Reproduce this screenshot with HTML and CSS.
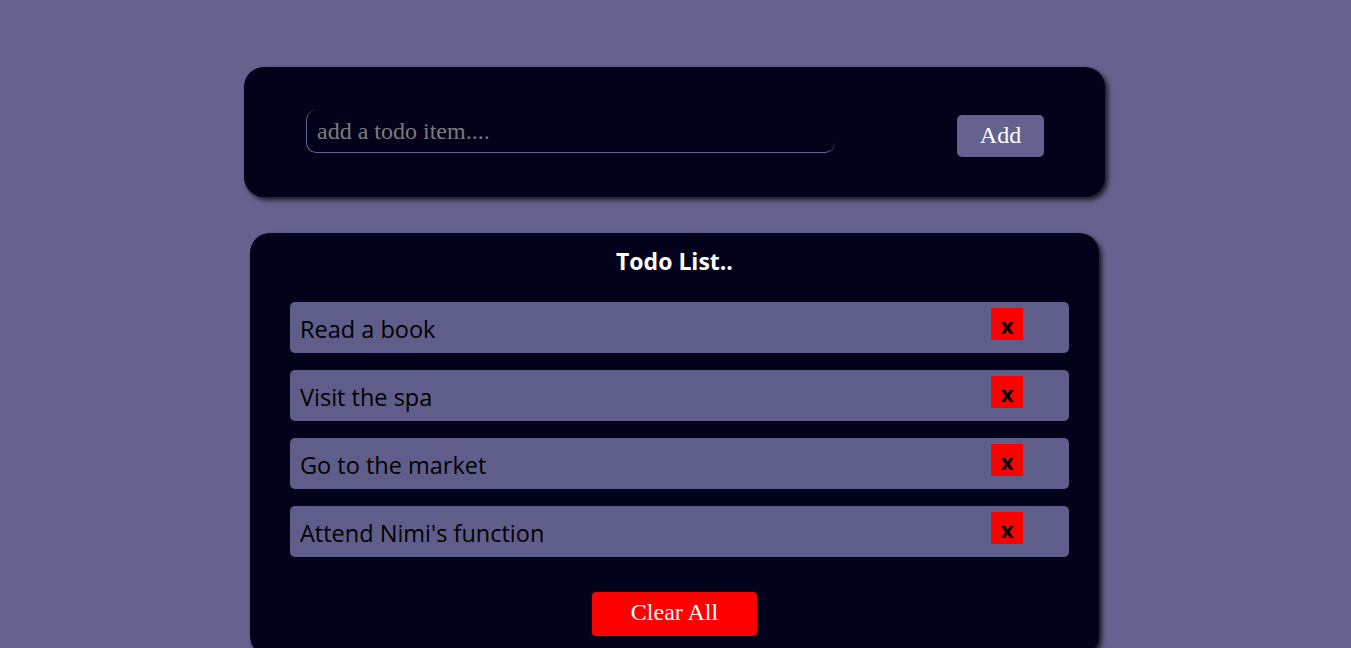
FILE: index.html
```html
<!DOCTYPE html>
<html>
<head>
<meta charset="utf-8">
<link rel="stylesheet" href="styles.css">
</head>
<body>
<div class="input-card">
  <input class="todo-input" type="text" placeholder="add a todo item....">
  <button class="add-btn">Add</button>
</div>
<div class="list-card">
  <h2 class="title">Todo List..</h2>
  <ul class="list">
    <li class="item"><span class="item-text">Read a book</span><button class="del">x</button></li>
    <li class="item"><span class="item-text">Visit the spa</span><button class="del">x</button></li>
    <li class="item"><span class="item-text">Go to the market</span><button class="del">x</button></li>
    <li class="item"><span class="item-text">Attend Nimi's function</span><button class="del">x</button></li>
  </ul>
  <div class="clear-row"><button class="clear-btn">Clear All</button></div>
</div>
</body>
</html>
```
FILE: styles.css
```css
html, body {
  margin: 0;
  padding: 0;
  background: #65628f;
  height: 100%;
  overflow: hidden;
}
body {
  padding-top: 67px;
  box-sizing: border-box;
}
.input-card {
  width: 861px;
  height: 130px;
  margin: 0 auto;
  box-sizing: border-box;
  background: #03021b;
  border-radius: 20px;
  box-shadow: 3px 3px 5px rgba(0, 0, 0, 0.75);
  display: flex;
  align-items: flex-start;
  justify-content: space-between;
  padding: 43px 61px 0 62px;
  position: relative;
  left: -1px;
}
.todo-input {
  width: 529px;
  height: 43px;
  box-sizing: border-box;
  background: transparent;
  border: none;
  border-left: 1px solid #65628f;
  border-bottom: 1px solid #65628f;
  border-radius: 10px;
  padding: 0 10px;
  font-family: "Liberation Serif", serif;
  font-size: 24px;
  color: #ccc;
  outline: none;
}
.todo-input::placeholder {
  color: #7c7b80;
}
.add-btn {
  margin-top: 5px;
  width: 87px;
  height: 42px;
  background: #65628f;
  border: none;
  border-radius: 5px;
  color: #fff;
  font-family: "Liberation Serif", serif;
  font-size: 24px;
  padding: 0 0 2px;
}
.list-card {
  width: 849px;
  margin: 36px auto 0;
  background: #03021b;
  border-radius: 20px;
  box-shadow: 3px 3px 5px rgba(0, 0, 0, 0.75);
  padding: 14px 30px 20px 40px;
  box-sizing: border-box;
  position: relative;
  left: -1px;
}
.title {
  margin: 0 10px 0 0;
  text-align: center;
  color: #fff;
  font-family: "Open Sans", sans-serif;
  font-weight: 700;
  font-size: 23px;
  line-height: 28px;
}
.list {
  list-style: none;
  margin: 27px 0 0;
  padding: 0;
  display: flex;
  flex-direction: column;
  gap: 17px;
}
.item {
  height: 51px;
  background: #5f5e8a;
  border-radius: 5px;
  display: flex;
  align-items: flex-start;
  box-sizing: border-box;
}
.item-text {
  padding: 12px 0 0 10px;
  font-family: "Open Sans", sans-serif;
  font-weight: 500;
  font-size: 23.5px;
  line-height: 30px;
  color: #000;
}
.del {
  margin: 6px 46px 0 auto;
  width: 32px;
  height: 32px;
  background: #ff0000;
  border: none;
  padding: 2px 0 0;
  font-family: "Open Sans", sans-serif;
  font-weight: 700;
  font-size: 22px;
  line-height: 24px;
  color: #000;
}
.clear-row {
  display: flex;
  justify-content: center;
  margin: 35px 10px 0 0;
}
.clear-btn {
  width: 165px;
  height: 44px;
  background: #ff0000;
  border: none;
  border-radius: 4px;
  color: #fff;
  font-family: "Liberation Serif", serif;
  font-size: 24px;
  padding: 0 0 4px;
}
```
